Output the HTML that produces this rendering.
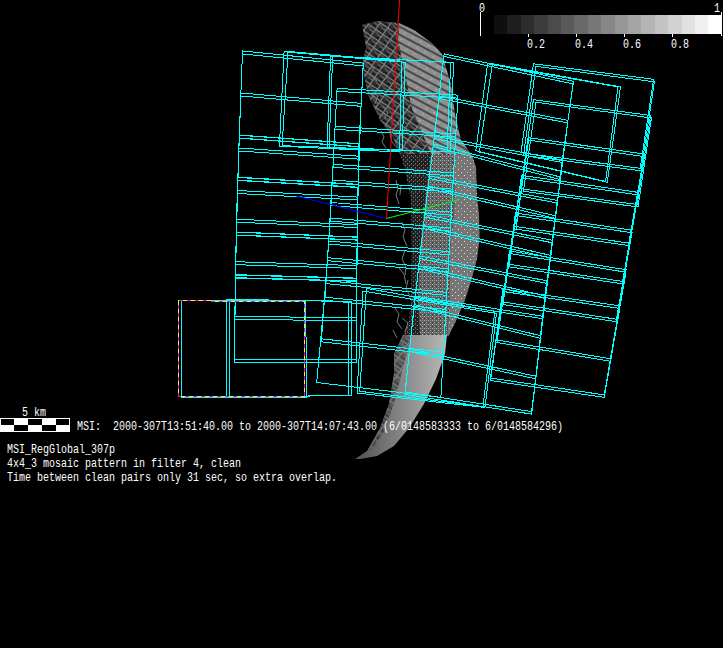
<!DOCTYPE html>
<html><head><meta charset="utf-8"><style>
html,body{margin:0;padding:0;background:#000;width:723px;height:648px;overflow:hidden}
svg{position:absolute;left:0;top:0}
.t{position:absolute;font-family:"Liberation Mono",monospace;font-size:10px;color:#fff;white-space:pre;line-height:14px;transform-origin:0 0;transform:scaleY(1.25)}
</style></head><body>
<svg width="723" height="648" viewBox="0 0 723 648">
<defs>
<pattern id="dots" width="6" height="6" patternUnits="userSpaceOnUse">
<rect width="6" height="6" fill="#7a7575"/><rect x="2" y="1" width="1" height="1" fill="#e8e8e8"/><rect x="5" y="4" width="1" height="1" fill="#c8c8c8"/>
</pattern>
<pattern id="dith" width="4" height="4" patternUnits="userSpaceOnUse">
<rect width="4" height="4" fill="#606060"/><rect x="0" y="0" width="1" height="1" fill="#b0b0b0"/><rect x="2" y="2" width="1" height="1" fill="#b0b0b0"/><rect x="2" y="0" width="1" height="1" fill="#888"/><rect x="0" y="2" width="1" height="1" fill="#333"/>
</pattern>
<pattern id="stripe" width="9" height="7" patternUnits="userSpaceOnUse" patternTransform="rotate(28)">
<rect width="9" height="7" fill="#8e8e8e"/><rect x="0" y="3" width="9" height="2" fill="#4a4a4a"/><rect x="3" y="0" width="2" height="1" fill="#b0b0b0"/>
</pattern>
<pattern id="tri" width="9" height="8" patternUnits="userSpaceOnUse" patternTransform="rotate(35)">
<rect width="9" height="8" fill="#2a2a2a"/><rect x="1" y="1" width="4" height="3" fill="#444"/><rect x="5" y="4" width="3" height="3" fill="#1a1a1a"/><path d="M0,0.5 H9 M0.5,0 V8 M4.5,4 H9" stroke="#858585" stroke-width="1"/>
</pattern>
<linearGradient id="gBot" x1="0" y1="0" x2="1" y2="0">
<stop offset="0" stop-color="#505050"/><stop offset="0.45" stop-color="#808080"/><stop offset="1" stop-color="#b8b8b8"/>
</linearGradient>
<pattern id="sparse" width="4" height="4" patternUnits="userSpaceOnUse">
<rect width="4" height="4" fill="#202020"/><rect x="1" y="1" width="1" height="1" fill="#8a8a8a"/><rect x="3" y="3" width="1" height="1" fill="#6a6a6a"/><rect x="3" y="0" width="1" height="1" fill="#505050"/>
</pattern>
</defs>
<!-- top cap mesh -->
<polygon fill="url(#tri)" points="362,25 377,21 399,23 398,40 405,75 412,109 431,154 400,154 392,136 380,120 368,95 362,65 366,47"/>
<polygon fill="url(#stripe)" points="399,23 414,30 432,43 442,54 451,84 455,114 461,140 472,155 431,154 412,109 405,75 398,40"/>
<polygon fill="url(#sparse)" points="400,154 431,154 425,200 420,250 418,300 420,335 403,335 409,320 411,300 411.6,250 411,200 405,170"/>
<polygon fill="url(#dith)" points="431,154 453,154 455,200 450,250 450,300 447,335 420,335 418,300 420,250 425,200"/>
<polygon fill="url(#dots)" points="453,154 472,155 476,167 477,197 479,214 479.6,239 477,258.5 472,278 465,300 456,321 448,337 447,335 450,300 450,250 455,200"/>
<!-- lower part -->
<polygon fill="url(#gBot)" points="403,335 447,335 445,354 436,379 424,404 409,428 394,446 377,456 360,459 355,459 367,451 380,428 389,404 394,374 394,354 403,335"/>
<polygon fill="url(#tri)" opacity="0.6" points="403,335 412,335 405,360 395,400 385,430 370,452 380,428 389,404 394,374 394,354"/>
<!-- sparse contour strokes -->
<g stroke="#7a7a7a" fill="none" stroke-width="1">
<path d="M381,131 l3,6 l-2,5 l4,6 M390,134 l2,8 l5,6 M396,180 l2,9 l-2,6 l3,9 M401,185 l-1,10 M402,222 l3,8 l-2,7 l4,9 M405,250 l-3,9 l4,8 l-1,8 M399,268 l5,6 l2,10 M408,280 l-2,9 l4,7 M395,308 l4,6 l-2,8 l5,7 M402,318 l6,5 l-3,9 M393,330 l4,8"/>
<path d="M368,62 l6,5 l-4,8 l7,6 M372,92 l6,4 l-3,8 M383,106 l5,7 l-4,6"/>
</g>

<g shape-rendering="crispEdges"><polygon points="242.5,51.0 363.3,63.1 359.0,143.9 239.3,135.2" fill="none" stroke="#0ff" stroke-width="1"/><polygon points="242.4,54.0 363.2,65.9 358.9,146.8 239.2,138.2" fill="none" stroke="#0ff" stroke-width="1"/><polygon points="240.9,93.0 361.1,103.4 358.2,184.3 237.9,177.2" fill="none" stroke="#0ff" stroke-width="1"/><polygon points="240.8,96.0 360.9,106.3 358.1,187.2 237.8,180.2" fill="none" stroke="#0ff" stroke-width="1"/><polygon points="239.3,135.0 359.0,143.7 357.4,224.7 236.5,219.2" fill="none" stroke="#0ff" stroke-width="1"/><polygon points="239.2,138.0 358.9,146.6 357.3,227.6 236.5,222.2" fill="none" stroke="#0ff" stroke-width="1"/><polygon points="237.9,177.5 358.2,184.6 356.9,265.6 235.7,261.7" fill="none" stroke="#0ff" stroke-width="1"/><polygon points="237.8,180.5 358.1,187.5 356.9,268.5 235.7,264.7" fill="none" stroke="#0ff" stroke-width="1"/><polygon points="238.9,148.0 358.6,156.2 357.1,237.2 236.3,232.2" fill="none" stroke="#0ff" stroke-width="1"/><polygon points="238.8,151.0 358.5,159.1 357.1,240.1 236.2,235.2" fill="none" stroke="#0ff" stroke-width="1"/><polygon points="237.5,190.5 358.0,197.1 356.8,278.1 235.5,274.7" fill="none" stroke="#0ff" stroke-width="1"/><polygon points="237.4,193.5 357.9,200.0 356.8,281.0 235.4,277.7" fill="none" stroke="#0ff" stroke-width="1"/><polygon points="236.3,232.0 357.1,237.0 356.5,318.0 234.9,316.2" fill="none" stroke="#0ff" stroke-width="1"/><polygon points="236.2,235.0 357.1,239.9 356.5,320.9 234.8,319.2" fill="none" stroke="#0ff" stroke-width="1"/><polygon points="235.5,275.0 356.8,278.4 356.4,359.3 234.5,359.2" fill="none" stroke="#0ff" stroke-width="1"/><polygon points="235.4,278.0 356.8,281.3 356.4,362.2 234.5,362.2" fill="none" stroke="#0ff" stroke-width="1"/><polygon points="284.1,51.1 401.9,61.2 399.4,152.0 279.4,146.1" fill="none" stroke="#0ff" stroke-width="1"/><polygon points="288.0,52.2 405.2,62.4 402.1,150.0 282.1,145.7" fill="none" stroke="#0ff" stroke-width="1"/><polygon points="330.6,56.0 450.7,62.4 447.0,152.0 327.0,148.0" fill="none" stroke="#0ff" stroke-width="1"/><polygon points="332.7,56.0 453.6,62.4 450.0,152.0 329.0,148.0" fill="none" stroke="#0ff" stroke-width="1"/><polygon points="487.6,63.8 618.0,86.9 605.6,181.5 475.8,150.8" fill="none" stroke="#0ff" stroke-width="1"/><polygon points="492.3,63.8 620.5,86.9 607.3,182.3 479.4,152.0" fill="none" stroke="#0ff" stroke-width="1"/><polygon points="181.5,300.5 305.4,300.5 307.0,397.0 181.5,397.0" fill="none" stroke="#0ff" stroke-width="1"/><polygon points="226.0,299.3 348.3,301.5 348.3,395.5 226.0,397.0" fill="none" stroke="#0ff" stroke-width="1"/><polygon points="229.4,299.3 351.6,301.5 351.6,395.5 229.4,397.0" fill="none" stroke="#0ff" stroke-width="1"/><polygon points="337.1,88.4 458.0,95.1 452.7,189.1 332.3,180.0" fill="none" stroke="#0ff" stroke-width="1"/><polygon points="336.9,91.4 457.9,98.1 452.5,192.1 332.2,183.0" fill="none" stroke="#0ff" stroke-width="1"/><polygon points="335.1,126.3 455.8,134.0 450.5,228.0 330.3,218.0" fill="none" stroke="#0ff" stroke-width="1"/><polygon points="335.0,129.3 455.6,137.0 450.3,231.1 330.1,221.0" fill="none" stroke="#0ff" stroke-width="1"/><polygon points="333.1,164.3 453.6,172.9 448.2,268.8 327.7,257.7" fill="none" stroke="#0ff" stroke-width="1"/><polygon points="333.0,167.3 453.4,176.0 448.0,271.9 327.5,260.7" fill="none" stroke="#0ff" stroke-width="1"/><polygon points="331.1,202.5 451.4,212.1 445.9,309.4 325.0,297.2" fill="none" stroke="#0ff" stroke-width="1"/><polygon points="331.0,205.5 451.2,215.2 445.7,312.5 324.8,300.2" fill="none" stroke="#0ff" stroke-width="1"/><polygon points="328.8,241.0 449.2,251.7 443.5,352.2 321.5,338.8" fill="none" stroke="#0ff" stroke-width="1"/><polygon points="328.6,244.0 449.0,254.8 443.3,355.3 321.2,341.8" fill="none" stroke="#0ff" stroke-width="1"/><polygon points="326.1,280.6 446.9,292.4 440.9,397.4 316.7,382.5" fill="none" stroke="#0ff" stroke-width="1"/><polygon points="325.9,283.6 446.7,295.4 440.9,397.4 316.7,382.5" fill="none" stroke="#0ff" stroke-width="1"/><polygon points="533.5,63.8 653.6,79.3 640.2,168.3 521.0,152.8" fill="none" stroke="#0ff" stroke-width="1"/><polygon points="536.0,66.3 654.4,81.8 641.0,170.8 523.5,155.3" fill="none" stroke="#0ff" stroke-width="1"/><polygon points="533.4,99.7 650.6,115.5 637.2,204.5 520.9,188.7" fill="none" stroke="#0ff" stroke-width="1"/><polygon points="535.9,102.2 651.4,118.0 638.0,207.0 523.4,191.2" fill="none" stroke="#0ff" stroke-width="1"/><polygon points="528.5,137.6 644.4,154.1 628.8,243.1 516.0,226.6" fill="none" stroke="#0ff" stroke-width="1"/><polygon points="528.5,140.1 644.4,156.6 628.8,245.6 516.0,229.1" fill="none" stroke="#0ff" stroke-width="1"/><polygon points="521.5,175.3 638.2,192.4 622.6,281.4 509.0,264.3" fill="none" stroke="#0ff" stroke-width="1"/><polygon points="521.5,177.8 638.2,194.9 622.6,283.9 509.0,266.8" fill="none" stroke="#0ff" stroke-width="1"/><polygon points="515.5,213.0 632.0,230.2 616.4,319.2 503.0,302.0" fill="none" stroke="#0ff" stroke-width="1"/><polygon points="515.5,215.5 632.0,232.7 616.4,321.7 503.0,304.5" fill="none" stroke="#0ff" stroke-width="1"/><polygon points="509.5,251.0 626.0,269.7 610.4,358.7 497.0,340.0" fill="none" stroke="#0ff" stroke-width="1"/><polygon points="509.5,253.5 626.0,272.2 610.4,361.2 497.0,342.5" fill="none" stroke="#0ff" stroke-width="1"/><polygon points="503.0,289.0 619.8,305.9 604.2,394.9 490.5,378.0" fill="none" stroke="#0ff" stroke-width="1"/><polygon points="503.0,291.5 619.8,308.4 604.2,397.4 490.5,380.5" fill="none" stroke="#0ff" stroke-width="1"/><polygon points="444.1,53.9 573.4,81.4 560.0,176.9 433.5,143.9" fill="none" stroke="#0ff" stroke-width="1"/><polygon points="443.8,56.4 573.1,83.9 559.7,179.4 433.1,146.4" fill="none" stroke="#0ff" stroke-width="1"/><polygon points="439.5,96.0 568.0,120.4 555.7,215.9 428.2,186.0" fill="none" stroke="#0ff" stroke-width="1"/><polygon points="439.2,98.5 567.7,122.9 555.4,218.4 427.9,188.5" fill="none" stroke="#0ff" stroke-width="1"/><polygon points="434.5,136.0 562.7,160.0 550.9,255.5 423.4,226.0" fill="none" stroke="#0ff" stroke-width="1"/><polygon points="434.1,138.5 562.3,162.5 550.5,258.0 423.1,228.5" fill="none" stroke="#0ff" stroke-width="1"/><polygon points="429.4,176.0 557.4,200.5 545.2,296.0 418.7,266.0" fill="none" stroke="#0ff" stroke-width="1"/><polygon points="429.1,178.5 557.2,203.0 545.0,298.5 418.4,268.5" fill="none" stroke="#0ff" stroke-width="1"/><polygon points="424.8,214.5 552.7,240.3 540.8,335.8 414.2,304.5" fill="none" stroke="#0ff" stroke-width="1"/><polygon points="424.5,217.0 552.4,242.8 540.5,338.3 414.0,307.0" fill="none" stroke="#0ff" stroke-width="1"/><polygon points="419.9,256.0 546.7,280.8 535.9,376.3 409.6,349.0" fill="none" stroke="#0ff" stroke-width="1"/><polygon points="419.6,258.5 546.5,283.3 535.6,378.8 409.3,351.5" fill="none" stroke="#0ff" stroke-width="1"/><polygon points="415.1,296.0 543.2,316.3 531.6,411.6 405.1,392.0" fill="none" stroke="#0ff" stroke-width="1"/><polygon points="414.8,298.5 542.9,318.8 531.6,414.1 405.0,394.5" fill="none" stroke="#0ff" stroke-width="1"/><polygon points="366.4,288.3 494.9,311.4 483.0,406.5 359.8,391.3" fill="none" stroke="#0ff" stroke-width="1"/><polygon points="363.0,291.0 496.5,313.5 485.0,407.5 357.0,393.0" fill="none" stroke="#0ff" stroke-width="1"/></g>
<g shape-rendering="crispEdges"></g>
<g shape-rendering="crispEdges"><rect x="493.9" y="15" width="13.5" height="19" fill="rgb(15,15,15)"/><rect x="507.3" y="15" width="13.5" height="19" fill="rgb(30,30,30)"/><rect x="520.7" y="15" width="13.5" height="19" fill="rgb(45,45,45)"/><rect x="534.1" y="15" width="13.5" height="19" fill="rgb(60,60,60)"/><rect x="547.5" y="15" width="13.5" height="19" fill="rgb(75,75,75)"/><rect x="560.9" y="15" width="13.5" height="19" fill="rgb(90,90,90)"/><rect x="574.3" y="15" width="13.5" height="19" fill="rgb(105,105,105)"/><rect x="587.7" y="15" width="13.5" height="19" fill="rgb(120,120,120)"/><rect x="601.1" y="15" width="13.5" height="19" fill="rgb(135,135,135)"/><rect x="614.5" y="15" width="13.5" height="19" fill="rgb(150,150,150)"/><rect x="627.9" y="15" width="13.5" height="19" fill="rgb(165,165,165)"/><rect x="641.3" y="15" width="13.5" height="19" fill="rgb(180,180,180)"/><rect x="654.7" y="15" width="13.5" height="19" fill="rgb(195,195,195)"/><rect x="668.1" y="15" width="13.5" height="19" fill="rgb(210,210,210)"/><rect x="681.5" y="15" width="13.5" height="19" fill="rgb(225,225,225)"/><rect x="694.9" y="15" width="13.5" height="19" fill="rgb(240,240,240)"/><rect x="708.3" y="15" width="13.5" height="19" fill="rgb(255,255,255)"/></g>
<g shape-rendering="crispEdges" stroke="#fff" fill="none">
<line x1="480.5" y1="12" x2="480.5" y2="36"/>
<line x1="721.5" y1="12" x2="721.5" y2="36"/>
<line x1="528.5" y1="34" x2="528.5" y2="37"/>
<line x1="576.5" y1="34" x2="576.5" y2="37"/>
<line x1="624.5" y1="34" x2="624.5" y2="37"/>
<line x1="672.5" y1="34" x2="672.5" y2="37"/>
</g>
<g shape-rendering="crispEdges" fill="none">
<path d="M178.5,396.5 L178.5,300.5 L211,300.5 M211,301.5 L304.5,301.5 L304.5,396.5 L178.5,396.5" stroke="#ff0"/>
<path d="M178.5,396.5 L178.5,300.5 L211,300.5 M211,301.5 L304.5,301.5 L304.5,396.5 L178.5,396.5" stroke="#f0f" stroke-dasharray="4 4"/>
</g>
<line x1="399.5" y1="0" x2="386.5" y2="218.5" stroke="#f00"/>
<line x1="386.5" y1="218.5" x2="295.8" y2="195.8" stroke="#00f"/>
<line x1="386.5" y1="218.5" x2="458.9" y2="199.7" stroke="#0f0"/>
<rect x="0.5" y="418.5" width="69" height="13" fill="#fff" stroke="#fff"/>
<g fill="#000" shape-rendering="crispEdges">
<rect x="1" y="419" width="13" height="6"/><rect x="28" y="419" width="14" height="6"/><rect x="56" y="419" width="13" height="6"/>
<rect x="14" y="425" width="14" height="6"/><rect x="42" y="425" width="14" height="6"/>
</g>
</svg>
<div class="t" style="left:479px;top:1px">0</div>
<div class="t" style="left:714px;top:1px">1</div>
<div class="t" style="left:527px;top:37px">0.2</div>
<div class="t" style="left:575px;top:37px">0.4</div>
<div class="t" style="left:623px;top:37px">0.6</div>
<div class="t" style="left:671px;top:37px">0.8</div>
<div class="t" style="left:22px;top:405px">5 km</div>
<div class="t" style="left:77px;top:419px">MSI:  2000-307T13:51:40.00 to 2000-307T14:07:43.00 (6/0148583333 to 6/0148584296)</div>
<div class="t" style="left:7px;top:442px">MSI_RegGlobal_307p</div>
<div class="t" style="left:7px;top:456px">4x4_3 mosaic pattern in filter 4, clean</div>
<div class="t" style="left:7px;top:470px">Time between clean pairs only 31 sec, so extra overlap.</div>
</body></html>
